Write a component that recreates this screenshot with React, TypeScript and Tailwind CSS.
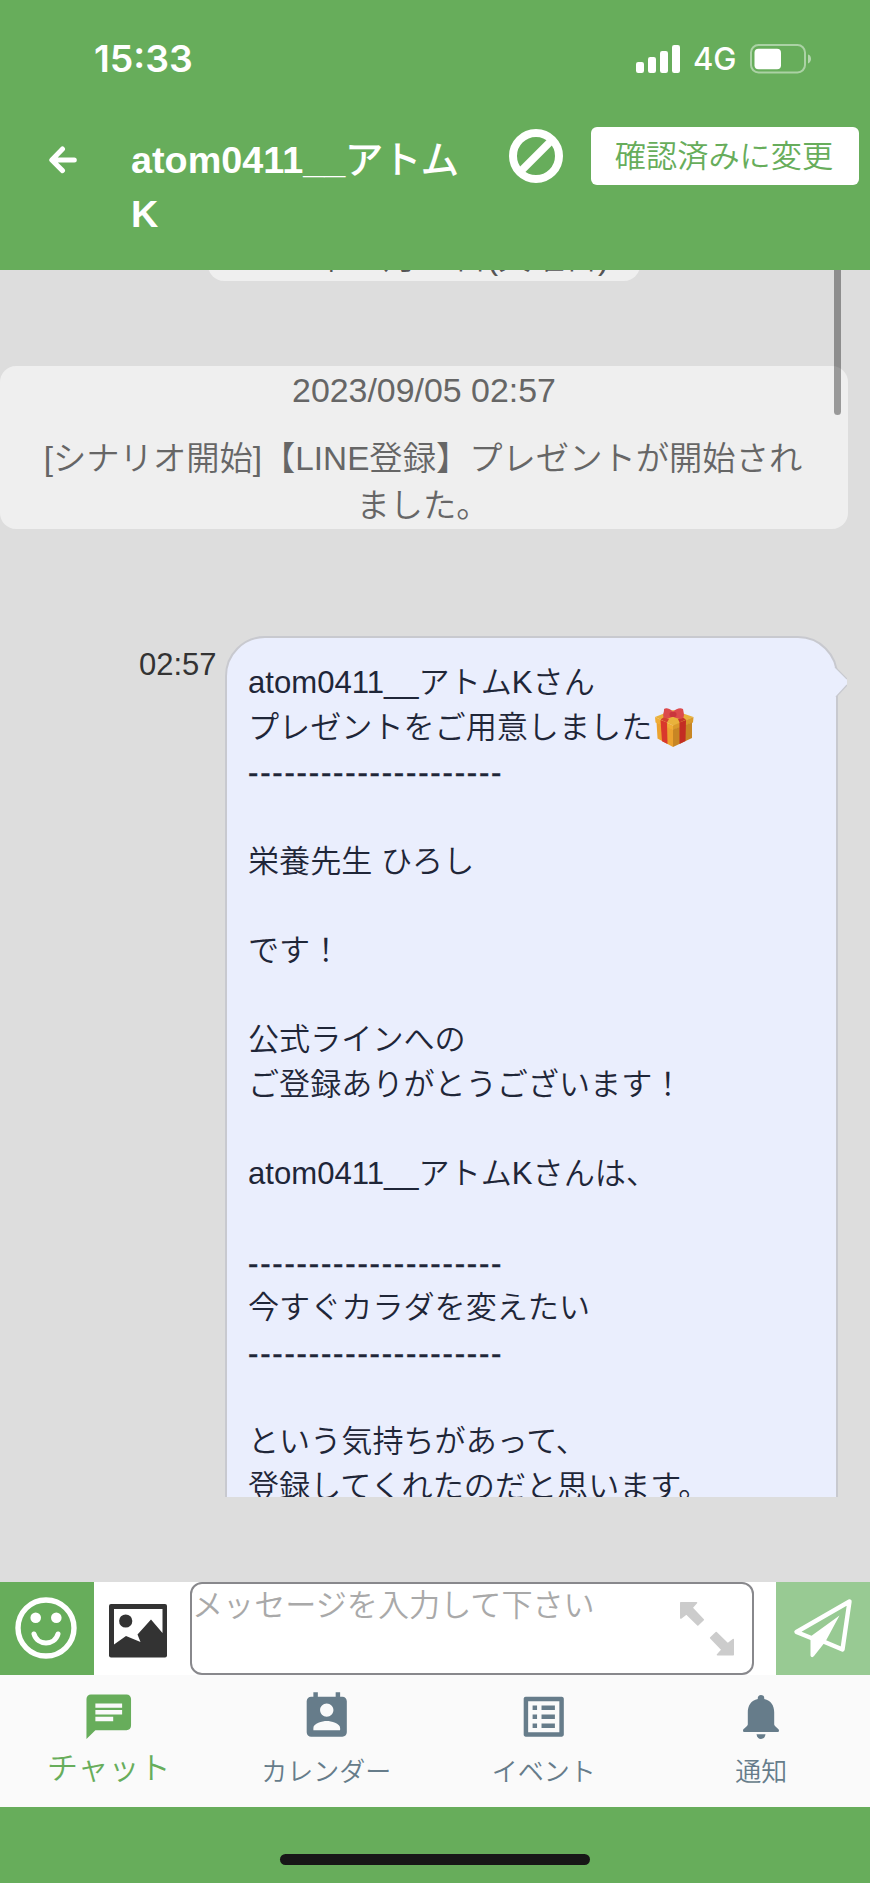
import type { ReactNode } from "react";
import { MdChat, MdOutlineListAlt, MdPermContactCalendar } from "react-icons/md";

const DASHES = "-".repeat(21);

const MESSAGE_LINES = [
  "atom0411__アトムKさん",
  "プレゼントをご用意しました🎁",
  DASHES,
  "",
  "栄養先生 ひろし",
  "",
  "です！",
  "",
  "公式ラインへの",
  "ご登録ありがとうございます！",
  "",
  "atom0411__アトムKさんは、",
  "",
  DASHES,
  "今すぐカラダを変えたい",
  DASHES,
  "",
  "という気持ちがあって、",
  "登録してくれたのだと思います。",
];

function GiftIcon() {
  return (
    <svg viewBox="0 0 39 39" className="ml-[3px] w-[39px] h-[39px]">
      <path d="M0 9 L18 2 L38.5 9 L19 18 Z" fill="#e9b23c" />
      <path d="M0 9 L18 17.5 L18 22 L0.5 14.5 Z" fill="#f0ad35" />
      <path d="M38.5 9 L18 17.5 L18 22 L38 14.5 Z" fill="#d99a2b" />
      <path d="M1.5 14.5 L18 21.5 L18 39 L2.5 30.5 Z" fill="#eca32f" />
      <path d="M37 14.5 L18 21.5 L18 39 L37 30 Z" fill="#c88624" />
      <path d="M5.5 12 L12 14.5 L12.5 36 L7 33.2 Z" fill="#d9382c" />
      <path d="M31 12 L24.5 14.5 L24.5 36 L30.5 33 Z" fill="#c32d23" />
      <path d="M5.5 11.5 L9 9 L14 11 L12 14.5 Z" fill="#d4402f" />
      <path d="M31 11.5 L27 9 L23 11 L24.5 14.5 Z" fill="#c7342a" />
      <path d="M18 3.5 C14 0 11 -0.5 9 1 C9.3 4 7.5 6 8.5 9 C11 11.5 15 10 18 8.5 C21 10.5 26 12 28.5 9.5 C29.5 6.5 28.5 4 28 1 C25 -1 21 1 18 3.5 Z" fill="#dc4a4c" />
      <rect x="14.5" y="4" width="7" height="5" rx="2" fill="#c9353c" />
    </svg>
  );
}

function SignalIcon() {
  return (
    <svg viewBox="0 0 44 28" className="w-11 h-7" fill="#fff">
      <rect x="0" y="17" width="8" height="11" rx="2.2" />
      <rect x="12" y="12" width="8" height="16" rx="2.2" />
      <rect x="24" y="6" width="8" height="22" rx="2.2" />
      <rect x="36" y="0" width="8" height="28" rx="2.2" />
    </svg>
  );
}

function BatteryIcon() {
  return (
    <svg viewBox="0 0 62 30" className="w-[62px] h-[30px]">
      <rect x="1" y="1" width="54" height="27.5" rx="7.5" fill="none" stroke="#fff" strokeOpacity="0.45" strokeWidth="2" />
      <rect x="4.5" y="4.7" width="26.5" height="20.5" rx="4" fill="#fff" />
      <path d="M58 10.5 C62 11.5 62 18 58 19.5 Z" fill="#fff" fillOpacity="0.5" />
    </svg>
  );
}

function BackIcon() {
  return (
    <svg viewBox="0 0 28 28" className="w-7 h-7" fill="none" stroke="#fff" strokeWidth="5" strokeLinecap="round" strokeLinejoin="round">
      <path d="M13.5 3 L2.8 14 L13.5 24.6 M3.5 14 H25.3" />
    </svg>
  );
}

function BlockIcon() {
  return (
    <svg viewBox="0 0 54 54" className="w-[54px] h-[54px]" fill="none" stroke="#fff">
      <circle cx="27" cy="27" r="23" strokeWidth="8" />
      <path d="M10.5 43.5 L43.5 10.5" strokeWidth="7.5" />
    </svg>
  );
}

function SmileIcon() {
  return (
    <svg viewBox="0 0 62 62" className="w-[62px] h-[62px] mr-[2px] mb-[2px]" fill="none" stroke="#fff">
      <circle cx="31" cy="31" r="28" strokeWidth="5.4" />
      <circle cx="20.7" cy="20.7" r="5.3" fill="#fff" stroke="none" />
      <circle cx="41.3" cy="20.7" r="5.3" fill="#fff" stroke="none" />
      <path d="M19 37 C22.5 49 39.5 49 43 37" strokeWidth="5" strokeLinecap="round" />
    </svg>
  );
}

function PictureIcon() {
  return (
    <svg viewBox="0 0 58 54" className="w-[58px] h-[54px]">
      <rect width="58" height="53.5" rx="2" fill="#333" />
      <path d="M5 5 H53.5 V29 L42 15.5 L28.5 30.5 L31.5 38 L17 32 L5 40.5 Z" fill="#fff" />
      <circle cx="16.7" cy="17" r="6.6" fill="#333" />
    </svg>
  );
}

function ExpandIcon() {
  return (
    <svg viewBox="0 0 54 54" className="w-[54px] h-[54px]" fill="#ccc" stroke="#ccc" strokeWidth="1.6" strokeLinejoin="round">
      <path d="M0.8 0.8 H16.5 L12 5.8 L23.3 17.7 L17.8 23 L6.3 11.8 L0.8 16 Z" />
      <path d="M53.2 52.8 H37.5 L42 47.8 L30.7 35.9 L36.2 30.6 L47.7 41.8 L53.2 37.6 Z" />
    </svg>
  );
}

function SendIcon() {
  return (
    <svg viewBox="0 0 60 60" className="w-[60px] h-[60px] mb-[1px]">
      <path d="M30.5 43.5 L49.5 51.5 L56.5 3.5 L3.5 34 L19.5 40.5" fill="none" stroke="#fff" strokeWidth="4.4" strokeLinejoin="round" />
      <path d="M46.5 17.5 L17.5 38.5 V57.5 C18 59.8 20 59.5 21 58 L32.5 43.5 Z" fill="#fff" />
    </svg>
  );
}

function BellIcon() {
  return (
    <svg viewBox="0 0 36 44" className="w-9 h-11" fill="currentColor">
      <path d="M18 0 C20.3 0 21.5 1.6 21.2 4 C28 5.5 31.2 10.5 31.2 17.5 V29.5 C32 32 36 33.5 36 35.5 C36 36.7 35.3 37 34.5 37 H1.5 C0.7 37 0 36.7 0 35.5 C0 33.5 4 32 4.8 29.5 V17.5 C4.8 10.5 8 5.5 14.8 4 C14.5 1.6 15.7 0 18 0 Z" />
      <path d="M13.5 39.3 H22.5 C22 42.5 20.5 44 18 44 C15.5 44 14 42.5 13.5 39.3 Z" />
    </svg>
  );
}

function MessageLine({ text }: { text: string }) {
  if (text === DASHES) {
    return <div className="h-[44.65px] pt-[1px] tracking-[1.8px] [-webkit-text-stroke:0.4px]">{text}</div>;
  }
  if (text.endsWith("🎁")) {
    return (
      <div className="h-[44.65px] flex items-center whitespace-nowrap">
        <span>{text.replace("🎁", "")}</span>
        <GiftIcon />
      </div>
    );
  }
  return <div className="h-[44.65px] whitespace-nowrap">{text}</div>;
}

function Tab({ icon, label, active = false }: { icon: ReactNode; label: string; active?: boolean }) {
  return (
    <div className={`flex-1 flex flex-col items-center pt-[15px] ${active ? "text-[#67ad5b]" : "text-[#667c8a]"}`}>
      <div className="h-[54px] flex items-center justify-center">{icon}</div>
      <span className={active ? "mt-[5px] text-[31px] leading-[40px]" : "mt-[8px] text-[26px] leading-[40px]"}>
        {label}
      </span>
    </div>
  );
}

export default function App() {
  return (
    <div className="w-[870px] h-[1883px] flex flex-col overflow-hidden bg-[#67ad5b] font-['Liberation_Sans','Noto_Sans_CJK_JP_DemiLight','Noto_Sans_CJK_JP',sans-serif] font-[350]">
      {/* Status bar */}
      <div className="h-[117px] shrink-0 flex items-center pl-[94px] pr-[58px] text-white font-['Inter',sans-serif]">
        <span className="text-[37.4px] font-semibold leading-none">15:33</span>
        <div className="ml-auto flex items-center">
          <SignalIcon />
          <span className="ml-[13px] w-[44px] text-[31px] font-medium leading-none">4G</span>
          <div className="ml-[13px]">
            <BatteryIcon />
          </div>
        </div>
      </div>

      {/* Header */}
      <header className="h-[153px] shrink-0 flex items-start pl-[49px] pr-[11px]">
        <div className="mt-[29px]">
          <BackIcon />
        </div>
        <h1 className="ml-[54px] mt-[17px] w-[340px] text-[37.8px] leading-[53.6px] font-bold text-white break-all">
          atom0411__アトムK
        </h1>
        <div className="ml-[38px] mt-[12px]">
          <BlockIcon />
        </div>
        <button className="ml-auto mt-[10px] w-[268px] h-[58px] shrink-0 rounded-md bg-white pt-[1px] pr-[2px] text-[31.2px] leading-[56px] text-[#67ad5b]">
          確認済みに変更
        </button>
      </header>

      {/* Chat history */}
      <main className="h-[1312px] shrink-0 bg-[#ddd]">
        <div className="relative w-[848px] h-[1227px] overflow-hidden">
          <div className="-mt-[37px] mx-auto w-[432px] h-12 rounded-2xl bg-[#efefef] text-center text-[33.3px] leading-[50px] text-[#555]">
            2023年09月05日(火曜日)
          </div>
          <div className="mt-[85px] h-[163px] rounded-2xl bg-[#efefef] text-center text-[33.3px] leading-[47px] text-[#666]">
            <p className="text-[33.9px] pt-[1px]">2023/09/05 02:57</p>
            <p className="mt-[21px] pr-[2px]">
              [シナリオ開始]【LINE登録】プレゼントが開始され
              <br />
              ました。
            </p>
          </div>

          <div className="mt-[107px] flex">
            <span className="ml-[139px] mt-[11px] w-[86px] text-[31px] leading-9 text-[#333]">02:57</span>
            <div className="relative w-[613px] h-[1000px] rounded-[40px] border-2 border-[#c8c9cf] bg-[#eaeefd] pl-[21px] pt-[23px] text-[31.1px] leading-[44.65px] text-[#1f2638]">
              {MESSAGE_LINES.map((line, i) => (
                <MessageLine key={i} text={line} />
              ))}
              <svg viewBox="0 0 14 34" className="absolute left-[606px] top-[28px] w-[14px] h-[34px]">
                <path d="M0 0 L3 2 L14 13 V19 L3 31 L0 31 Z" fill="#eaeefd" />
                <path d="M2 1 L14 13 M14 19 L3 31" fill="none" stroke="#c8c9cf" strokeWidth="1.2" />
              </svg>
            </div>
          </div>

          <div className="absolute right-[7px] top-0 w-[7px] h-[145px] rounded-b-full bg-black/36" />
        </div>
      </main>

      {/* Message input */}
      <div className="h-[93px] shrink-0 flex bg-white">
        <div className="w-[94px] flex items-center justify-center bg-[#67ad5b]">
          <SmileIcon />
        </div>
        <div className="w-[96px] pl-[15px] pt-[22px]">
          <PictureIcon />
        </div>
        <div className="w-[564px] flex justify-between rounded-xl border-2 border-[#88888c] pr-[18px]">
          <span className="text-[31.1px] leading-[44px] text-[#a9a9a9]">メッセージを入力して下さい</span>
          <div className="mt-[18px]">
            <ExpandIcon />
          </div>
        </div>
        <div className="ml-auto w-[94px] flex items-center justify-center bg-[#98ca93]">
          <SendIcon />
        </div>
      </div>

      {/* Tab bar */}
      <nav className="h-[132px] shrink-0 flex bg-[#fafafa]">
        <Tab active icon={<MdChat size={53.5} />} label="チャット" />
        <Tab icon={<MdPermContactCalendar size={53.5} />} label="カレンダー" />
        <Tab icon={<MdOutlineListAlt size={53.5} />} label="イベント" />
        <Tab icon={<BellIcon />} label="通知" />
      </nav>

      {/* Home indicator */}
      <div className="mt-[47px] mx-auto w-[310px] h-[11px] shrink-0 rounded-full bg-[#171717]" />
    </div>
  );
}
